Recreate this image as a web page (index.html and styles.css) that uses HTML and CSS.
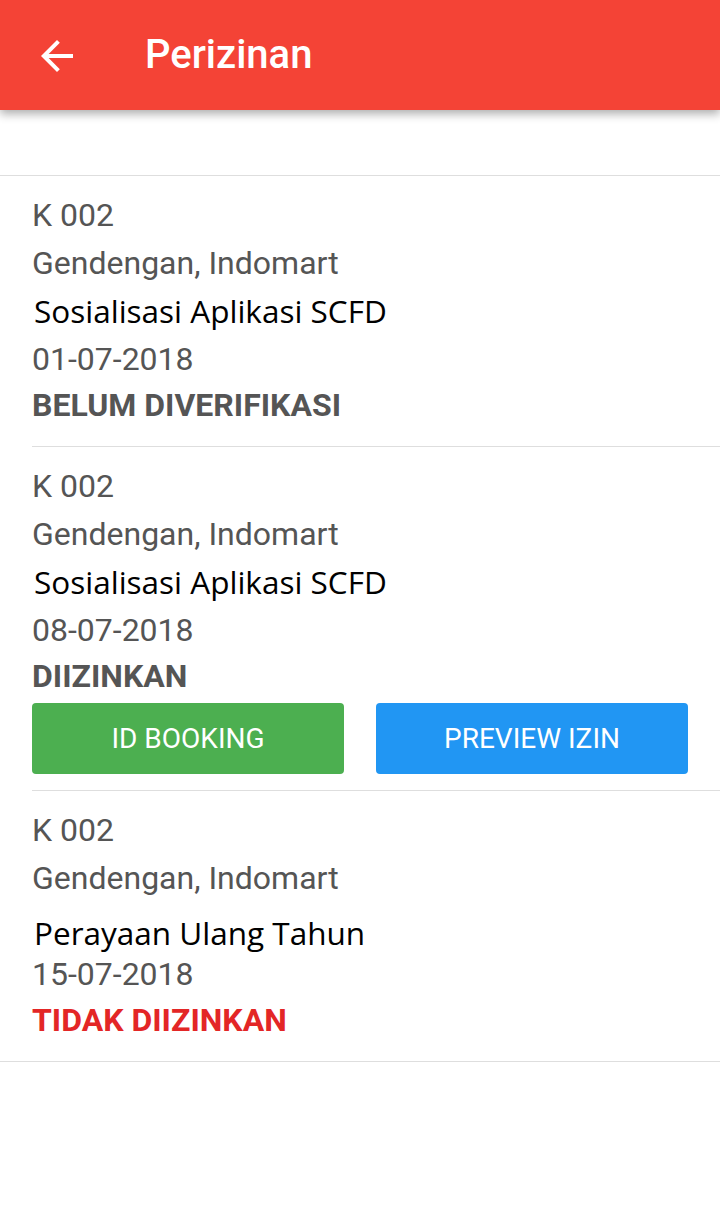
FILE: index.html
```html
<!DOCTYPE html>
<html lang="id">
<head>
<meta charset="utf-8">
<title>Perizinan</title>
<link rel="stylesheet" href="styles.css">
</head>
<body>
<header class="appbar">
  <svg class="back" viewBox="0 0 24 24" width="48" height="48" aria-hidden="true">
    <path d="M20 11H7.83l5.59-5.59L12 4l-8 8 8 8 1.41-1.41L7.83 13H20v-2z" fill="#fff"/>
  </svg>
  <h1 class="appbar-title">Perizinan</h1>
</header>

<main class="list">
  <section class="item">
    <div class="row">K 002</div>
    <div class="row">Gendengan, Indomart</div>
    <div class="row title">Sosialisasi Aplikasi SCFD</div>
    <div class="row">01-07-2018</div>
    <div class="row status">BELUM DIVERIFIKASI</div>
  </section>

  <section class="item">
    <div class="row">K 002</div>
    <div class="row">Gendengan, Indomart</div>
    <div class="row title">Sosialisasi Aplikasi SCFD</div>
    <div class="row">08-07-2018</div>
    <div class="row status">DIIZINKAN</div>
    <div class="actions">
      <button class="btn btn-green">ID BOOKING</button>
      <button class="btn btn-blue">PREVIEW IZIN</button>
    </div>
  </section>

  <section class="item">
    <div class="row">K 002</div>
    <div class="row">Gendengan, Indomart</div>
    <div class="row title title-low">Perayaan Ulang Tahun</div>
    <div class="row">15-07-2018</div>
    <div class="row status status-red">TIDAK DIIZINKAN</div>
  </section>
</main>
</body>
</html>
```

FILE: styles.css
```css
* { box-sizing: border-box; }

html, body {
  margin: 0;
  padding: 0;
  background: #fff;
}

body {
  width: 720px;
  min-height: 1231px;
  font-family: Roboto, "Liberation Sans", sans-serif;
}

.appbar {
  height: 110px;
  background: #f44336;
  display: flex;
  align-items: center;
  padding-left: 33px;
  box-shadow: 0 4px 9px rgba(0, 0, 0, 0.32);
  position: relative;
  z-index: 1;
}

.back {
  display: block;
  flex: none;
  margin-top: 2px;
}

.appbar-title {
  margin: 0 0 0 64px;
  font-family: Roboto, sans-serif;
  font-weight: 500;
  font-size: 40px;
  color: #fff;
  line-height: 1;
}

.list {
  margin-top: 65px;
  border-top: 1px solid #dedede;
  border-bottom: 1px solid #dedede;
}

.item {
  margin-left: 32px;
  padding: 15px 32px 15px 0;
  border-bottom: 1px solid #dedede;
}

.item:last-child {
  border-bottom: none;
}

.row {
  height: 48px;
  line-height: 48px;
  font-size: 32px;
  color: #555;
  white-space: nowrap;
}

.title {
  font-family: "Open Sans", sans-serif;
  font-size: 31.5px;
  color: #000;
  padding-left: 2px;
}

.title-low {
  padding-top: 7px;
  margin-bottom: -7px;
  height: 55px;
}

.status {
  font-weight: 700;
  color: #555;
  line-height: 44px;
}

.status-red {
  color: #e32626;
}

.actions {
  margin: 1px 0 1px;
  display: grid;
  grid-template-columns: 1fr 1fr;
  gap: 32px;
}

.btn {
  height: 71px;
  border: none;
  border-radius: 4px;
  font-family: Roboto, sans-serif;
  font-size: 28px;
  color: #fff;
  padding: 0;
}

.btn-green { background: #4caf50; }
.btn-blue { background: #2196f3; }
```
